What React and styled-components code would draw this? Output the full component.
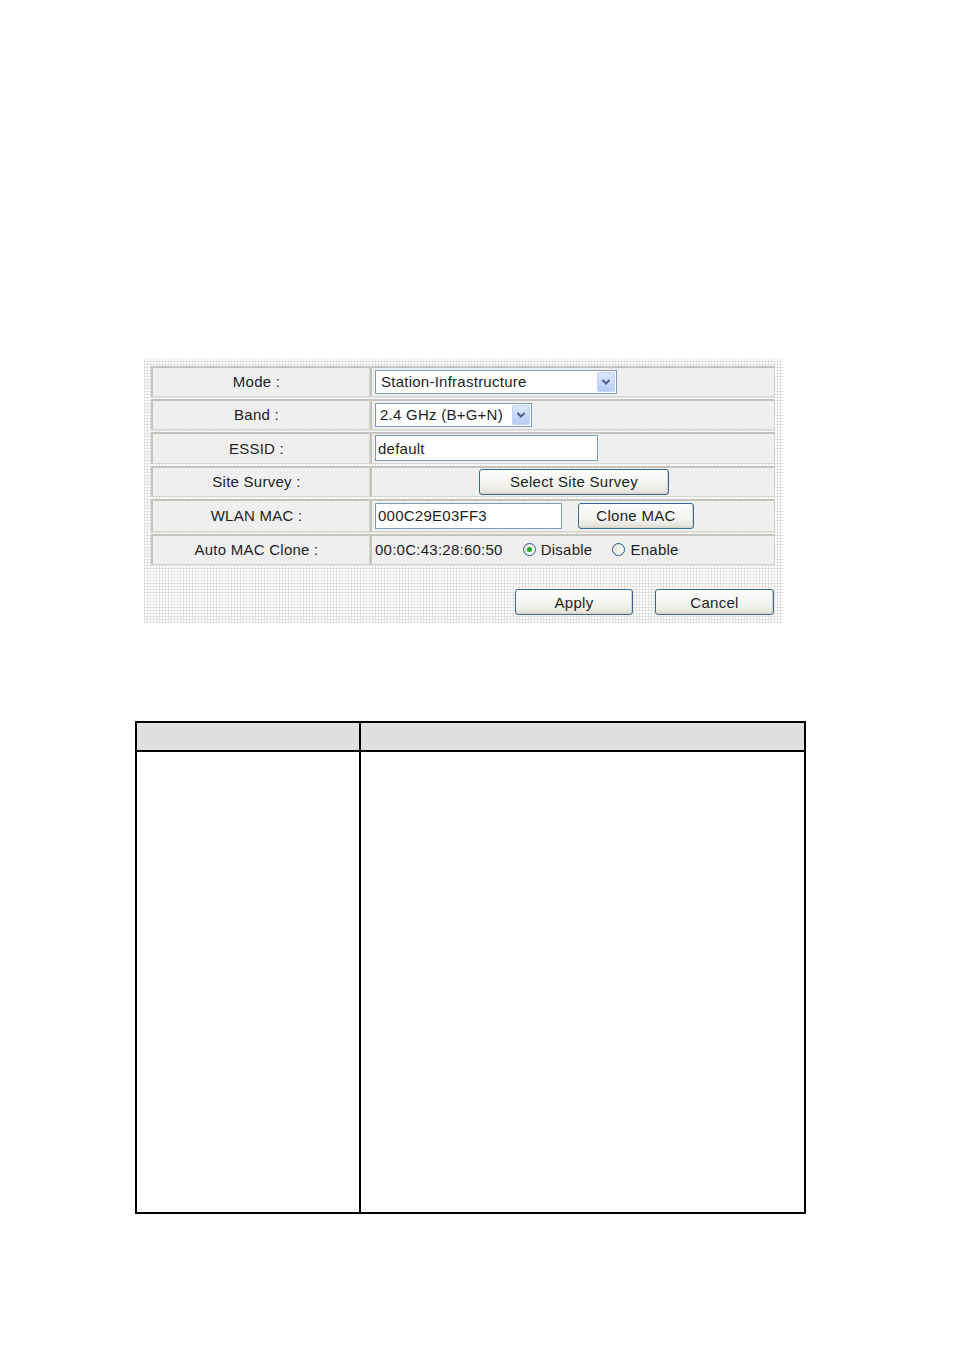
import React from "react"
import styled, { createGlobalStyle } from "styled-components"

const Global = createGlobalStyle`
  html, body { margin: 0; padding: 0; background: #fff; }
  body { width: 954px; height: 1350px; font-family: "Liberation Sans", Arial, sans-serif; }
`

const Page = styled.div`
  width: 954px;
  height: 1350px;
  padding-top: 359px;
  box-sizing: border-box;
`

const Panel = styled.div`
  margin-left: 144px;
  width: 639px;
  height: 264px;
  box-sizing: border-box;
  padding: 7px 8px 0 7px;
  background-color: #fff;
  background-image:
    repeating-linear-gradient(0deg, #e2e2e2 0 1px, transparent 1px 3px),
    repeating-linear-gradient(90deg, #e2e2e2 0 1px, transparent 1px 3px);
`

const Rows = styled.div`
  display: flex;
  flex-direction: column;
  gap: 2px;
`

const Row = styled.div`
  display: grid;
  grid-template-columns: 219px 1fr;
  height: ${p => p.$h || 31}px;
`

const Cell = styled.div`
  display: flex;
  align-items: center;
  justify-content: ${p => (p.$center ? "center" : "flex-start")};
  padding-left: ${p => (p.$center ? 0 : 3)}px;
  padding-bottom: 1px;
  background: #efefef;
  border-top: 2px solid #c4c4bc;
  border-left: 2px solid #c4c4bc;
  border-bottom: 1px solid #d6d6d0;
  border-right: 1px solid #d6d6d0;
  box-sizing: border-box;
  font-size: 15px;
  letter-spacing: 0.25px;
  color: #1e1e1e;
  white-space: nowrap;
`

const Label = styled(Cell)`
  justify-content: center;
  padding-left: 0;
  padding-right: 9px;
`

const Select = styled.div`
  width: ${p => p.$w}px;
  height: 24px;
  box-sizing: border-box;
  border: 1px solid #7f9db9;
  background: #fff;
  display: flex;
  align-items: center;
  justify-content: space-between;
  padding: 1px 1px 1px ${p => p.$pl || 5}px;
  font-size: 15px;
`

const Arrow = styled.div`
  width: 18px;
  height: 20px;
  border-radius: 2px;
  background: linear-gradient(#dbe6fb, #b7cdf7);
  border: 1px solid #c3d3f5;
  box-sizing: border-box;
  display: flex;
  align-items: center;
  justify-content: center;
`

const Input = styled.div`
  width: ${p => p.$w}px;
  height: 26px;
  box-sizing: border-box;
  border: 1px solid #7f9db9;
  background: #fff;
  padding-left: 2px;
  display: flex;
  align-items: center;
  font-size: 15px;
`

const Button = styled.div`
  width: ${p => p.$w}px;
  height: 26px;
  margin-left: ${p => p.$ml || 0}px;
  box-sizing: border-box;
  border: 1px solid #3b6790;
  border-radius: 3px;
  background: linear-gradient(#fdfdfd, #f1f1ec 70%, #dedcd3);
  display: flex;
  align-items: center;
  justify-content: center;
  font-size: 15px;
  letter-spacing: 0.3px;
  color: #1e1e1e;
  box-shadow: inset -1px -1px 0 #d6d3c7;
`

const Radio = styled.span`
  width: 13px;
  height: 13px;
  border-radius: 50%;
  border: 1px solid #2e5a8c;
  box-sizing: border-box;
  background: linear-gradient(135deg, #dcdcd4, #fff);
  display: inline-flex;
  align-items: center;
  justify-content: center;
  margin-right: 5px;
  &::after {
    content: "";
    width: 5px;
    height: 5px;
    border-radius: 50%;
    background: ${p => (p.$on ? "#28a528" : "transparent")};
  }
`

const Choice = styled.span`
  display: inline-flex;
  align-items: center;
  margin-left: ${p => p.$ml}px;
`

const Actions = styled.div`
  display: flex;
  justify-content: flex-end;
  gap: 22px;
  margin-top: 24px;
  padding-right: 1px;
`

const InfoTable = styled.div`
  margin: 98px 0 0 135px;
  width: 671px;
  height: 493px;
  box-sizing: border-box;
  border: 2px solid #000;
  display: grid;
  grid-template-columns: 224px 1fr;
  grid-template-rows: 29px 1fr;
`

const InfoCell = styled.div`
  background: ${p => (p.$head ? "#e0e0e0" : "#fff")};
  border-right: ${p => (p.$first ? "2px solid #000" : "none")};
  border-bottom: ${p => (p.$head ? "2px solid #000" : "none")};
`

const Chevron = () => (
  <svg width="10" height="8" viewBox="0 0 10 8">
    <path d="M1.5 2 L5 5.5 L8.5 2" fill="none" stroke="#4d6185" strokeWidth="2" />
  </svg>
)

export default function App() {
  return (
    <Page>
      <Global />
      <Panel>
        <Rows>
          <Row $h={31}>
            <Label>Mode :</Label>
            <Cell>
              <Select $w={242}>Station-Infrastructure<Arrow><Chevron /></Arrow></Select>
            </Cell>
          </Row>
          <Row $h={31}>
            <Label>Band :</Label>
            <Cell>
              <Select $w={157} $pl={4}>2.4 GHz (B+G+N)<Arrow><Chevron /></Arrow></Select>
            </Cell>
          </Row>
          <Row $h={32}>
            <Label>ESSID :</Label>
            <Cell>
              <Input $w={223}>default</Input>
            </Cell>
          </Row>
          <Row $h={31}>
            <Label>Site Survey :</Label>
            <Cell $center>
              <Button $w={190} $ml={2}>Select Site Survey</Button>
            </Cell>
          </Row>
          <Row $h={33}>
            <Label>WLAN MAC :</Label>
            <Cell>
              <Input $w={187}>000C29E03FF3</Input>
              <Button $w={116} $ml={16}>Clone MAC</Button>
            </Cell>
          </Row>
          <Row $h={31}>
            <Label>Auto MAC Clone :</Label>
            <Cell>
              00:0C:43:28:60:50
              <Choice $ml={20}><Radio $on />Disable</Choice>
              <Choice $ml={20}><Radio />Enable</Choice>
            </Cell>
          </Row>
        </Rows>
        <Actions>
          <Button $w={118}>Apply</Button>
          <Button $w={119}>Cancel</Button>
        </Actions>
      </Panel>
      <InfoTable>
        <InfoCell $head $first />
        <InfoCell $head />
        <InfoCell $first />
        <InfoCell />
      </InfoTable>
    </Page>
  )
}
